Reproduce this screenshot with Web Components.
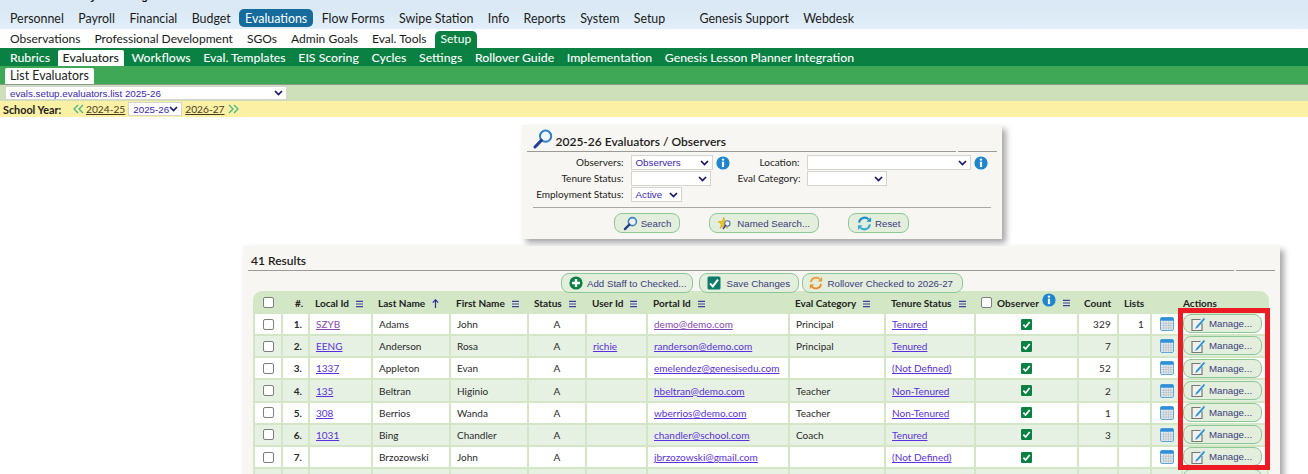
<!DOCTYPE html>
<html>
<head>
<meta charset="utf-8">
<title>Evaluators</title>
<style>
  html, body { margin: 0; padding: 0; height: 474px; overflow: hidden; background: #fff; }
  body { font-family: Lato, "Liberation Sans", sans-serif; }
</style>
</head>
<body>
<gn-header></gn-header>
<gn-page></gn-page>

<script>
const ICONS = {
  search: `<svg viewBox="0 0 16 16" width="15" height="15"><circle cx="10" cy="6" r="4.3" fill="#eaf3fb" stroke="#3f7fc4" stroke-width="1.7"/><path d="M6.8 9.2 2 14" stroke="#27408b" stroke-width="2.4" stroke-linecap="round"/></svg>`,
  bigsearch: `<svg viewBox="0 0 20 20" width="20" height="20"><circle cx="12.6" cy="7.2" r="5.6" fill="#f2f7fc" stroke="#2f7fd0" stroke-width="2"/><path d="M8.4 11.4 2 18" stroke="#1f3f96" stroke-width="3" stroke-linecap="round"/></svg>`,
  star: `<svg viewBox="0 0 18 16" width="16" height="15"><path d="M6.5 1 8.2 5.6 13 5.8 9.3 8.8 10.6 13.6 6.5 10.9 2.4 13.6 3.7 8.8 0 5.8 4.8 5.6Z" fill="#f2c21b" stroke="#c99a10" stroke-width=".5"/><circle cx="10.5" cy="8" r="3" fill="#eef4fa" stroke="#4a6fb5" stroke-width="1.2"/><path d="M8.4 10.2 6 13.6" stroke="#2b4590" stroke-width="1.6" stroke-linecap="round"/></svg>`,
  refresh: `<svg viewBox="0 0 16 16" width="15" height="15" fill="none"><path d="M2.2 7A6 6 0 0 1 12.4 3.6" stroke="#1d8fd0" stroke-width="2.2"/><path d="M10 6.2h5V1.2Z" fill="#1d8fd0"/><path d="M13.8 9A6 6 0 0 1 3.6 12.4" stroke="#35a9d8" stroke-width="2.2"/><path d="M6 9.8H1v5Z" fill="#35a9d8"/></svg>`,
  plus: `<svg viewBox="0 0 14 14" width="14" height="14"><circle cx="7" cy="7" r="6.6" fill="#0a8043"/><path d="M7 3v8M3 7h8" stroke="#fff" stroke-width="2.4"/></svg>`,
  save: `<svg viewBox="0 0 14 14" width="14" height="14"><rect x=".5" y=".5" width="13" height="13" rx="1.5" fill="#0d7a6a"/><path d="M3 7.4 5.8 10.4 11 3.6" fill="none" stroke="#fff" stroke-width="2"/></svg>`,
  rollover: `<svg viewBox="0 0 16 16" width="14" height="14" fill="none"><path d="M2.2 7A6 6 0 0 1 12.4 3.6" stroke="#ef9a32" stroke-width="2"/><path d="M10 6.2h5V1.2Z" fill="#ef9a32"/><path d="M13.8 9A6 6 0 0 1 3.6 12.4" stroke="#ea8a22" stroke-width="2"/><path d="M6 9.8H1v5Z" fill="#ea8a22"/></svg>`,
  manage: `<svg viewBox="0 0 14 14" width="14" height="14" fill="none"><path d="M9.5 2.5H1v11h10V6" fill="#f1f1ee" stroke="#777" stroke-width="1.2"/><path d="M13 .8 5.2 9.4 4 12l2.6-1.2L14 2.2Z" fill="#2a94d8"/></svg>`,
  info: `<svg viewBox="0 0 14 14" width="14" height="14"><circle cx="7" cy="7" r="6.6" fill="#1e86cf"/><circle cx="7" cy="3.6" r="1.2" fill="#fff"/><rect x="5.9" y="5.7" width="2.2" height="5.4" fill="#fff"/></svg>`,
  calendar: `<svg viewBox="0 0 14 14" width="14" height="14"><rect x=".5" y=".5" width="13" height="13" rx="1.5" fill="#e9eef2" stroke="#5fa8dc"/><rect x=".5" y=".5" width="13" height="3.2" rx="1" fill="#2f8fd8"/><path d="M1 6.3h12M1 8.6h12M1 11h12M3.6 4v9M6 4v9M8.4 4v9M10.8 4v9" stroke="#b5bcc2" stroke-width=".7"/></svg>`,
  menu: `<svg viewBox="0 0 8 8" width="7" height="8"><path d="M0 1h8M0 4h8M0 7h8" stroke="#3f3f9e" stroke-width="1.3"/></svg>`,
  sortUp: `<svg viewBox="0 0 7 9" width="7" height="9" fill="none"><path d="M3.5 9V1M.8 3.6 3.5 .8l2.7 2.8" stroke="#2d2d9e" stroke-width="1.2"/></svg>`,
  chevron: `<svg viewBox="0 0 9 6" width="9" height="6" fill="none"><path d="M1 1 4.5 4.5 8 1" stroke="#14147a" stroke-width="1.7"/></svg>`,
  check: `<svg viewBox="0 0 11 11" width="11" height="11"><rect width="11" height="11" rx="1.3" fill="#0a8043"/><path d="M2.4 5.7 4.6 8 8.7 3" fill="none" stroke="#fff" stroke-width="1.8"/></svg>`,
  prev: `<svg viewBox="0 0 11 10" width="11" height="10" fill="none"><path d="M5 1 1 5l4 4M10 1 6 5l4 4" stroke="#43b98a" stroke-width="1.3"/></svg>`,
  next: `<svg viewBox="0 0 11 10" width="11" height="10" fill="none"><path d="M1 1l4 4-4 4M6 1l4 4-4 4" stroke="#43b98a" stroke-width="1.3"/></svg>`
};

class GnTab extends HTMLElement {
  connectedCallback() {
    this.attachShadow({ mode: "open" });
    this.shadowRoot.innerHTML = `
      <style>
        :host { display: block; padding: var(--tab-pt, 0) var(--tab-pad, 6px) var(--tab-pb, 0); color: var(--tab-color, #1a1a1a); white-space: nowrap; }
        :host([active]) { background: var(--tab-active-bg); color: var(--tab-active-color); border-radius: var(--tab-radius, 4px); }
      </style>
      <slot></slot>`;
  }
}
customElements.define("gn-tab", GnTab);

class GnBar extends HTMLElement {
  connectedCallback() {
    this.attachShadow({ mode: "open" });
    this.shadowRoot.innerHTML = `
      <style>
        :host { display: flex; align-items: flex-end; box-sizing: border-box; font: 12.4px/17px Lato, "Liberation Sans", sans-serif; }
        :host([kind="main"]) { height: 24px; padding: 4px 0 2px 4px; gap: 2.4px; background: linear-gradient(#d9e8f4, #e2effa); line-height: 17px; --tab-pt: 1px;
          --tab-active-bg: #156b9c; --tab-active-color: #fff; --tab-radius: 5px; }
        :host([kind="sub"]) { height: 19px; padding-left: 4px; gap: 2px; background: #fff; font-size: 12.05px; line-height: 16px; --tab-pb: 1px;
          --tab-active-bg: #0a8043; --tab-active-color: #fff; --tab-radius: 5px 5px 0 0; }
        :host([kind="third"]) { height: 18px; padding-left: 5px; gap: 2.6px; background: #0a8043; --tab-color: #fff; --tab-pad: 5px; font-size: 12.3px; font-weight: 500; line-height: 16px;
          --tab-active-bg: #fff; --tab-active-color: #222; --tab-radius: 2px 2px 0 0; }
        :host([kind="fourth"]) { height: 19px; padding-left: 5px; background: #3fa856; border-bottom: 1px solid #8c9a8c;
          --tab-active-bg: #fff; --tab-active-color: #222; --tab-radius: 2px 2px 0 0; --tab-pad: 5px; line-height: 16px; }
      </style>
      <slot></slot>`;
  }
}
customElements.define("gn-bar", GnBar);

class GnSelect extends HTMLElement {
  connectedCallback() {
    this.attachShadow({ mode: "open" });
    const w = this.getAttribute("width") || 80;
    this.shadowRoot.innerHTML = `
      <style>
        :host { display: inline-flex; align-items: center; box-sizing: border-box; width: ${w}px; height: 15px;
          padding: 0 3px 0 4px; background: #fff; border: 1px solid #d4d4d0; color: #3a1fb4;
          font: 9.8px "Liberation Sans", Arial, sans-serif; white-space: nowrap; }
        svg { flex: none; margin-left: auto; }
      </style>
      <slot></slot>${ICONS.chevron}`;
  }
}
customElements.define("gn-select", GnSelect);

class GnBtn extends HTMLElement {
  connectedCallback() {
    this.attachShadow({ mode: "open" });
    const icon = ICONS[this.getAttribute("icon")] || "";
    this.shadowRoot.innerHTML = `
      <style>
        :host { display: inline-flex; align-items: center; box-sizing: border-box; height: 20px; padding: 0 9px; gap: 3px;
          background: #e3eedd; border: 1.5px solid #8cc896; border-radius: 8px; color: #3c3c7c;
          font: 9.7px "Liberation Sans", Arial, sans-serif; white-space: nowrap; }
        svg { display: block; flex: none; }
      </style>
      ${icon}<slot></slot>`;
  }
}
customElements.define("gn-btn", GnBtn);

class GnPanel extends HTMLElement {
  connectedCallback() {
    this.attachShadow({ mode: "open" });
    this.shadowRoot.innerHTML = `
      <style>
        :host { display: block; position: relative; box-sizing: border-box; background: #f8f6f2; box-shadow: 4px 4px 6px rgba(0,0,0,.35); padding: 0 5px; }
        .head { display: flex; align-items: flex-end; gap: 3px; font: 600 12px/15px Lato, "Liberation Sans", sans-serif; color: #1c1c1c; height: var(--head-h, 24px); padding: 0 var(--head-pad, 6px) 2px; box-sizing: border-box; }
        .rule { display: flex; gap: 2px; height: 1px; }
        .rule i { background: #9a9a96; flex: 1; }
        .rule i + i { flex: none; width: 39px; }
      </style>
      <div class="head"><slot name="icon"></slot><slot name="title"></slot></div>
      <div class="rule"><i></i><i></i></div>
      <slot></slot>`;
  }
}
customElements.define("gn-panel", GnPanel);

class GnInfo extends HTMLElement {
  connectedCallback() {
    this.attachShadow({ mode: "open" });
    this.shadowRoot.innerHTML = `<style>:host { display: inline-block; width: 14px; height: 14px; } svg { display: block; }</style>${ICONS.info}`;
  }
}
customElements.define("gn-info", GnInfo);

class GnHeader extends HTMLElement {
  connectedCallback() {
    this.attachShadow({ mode: "open" });
    this.shadowRoot.innerHTML = `
      <style>
        :host { display: block; }
        .title { height: 5px; overflow: hidden; background: #d9e8f4; }
        .title b { display: block; margin: -12px 0 0 5px; font: 700 11px/16px "Liberation Sans", sans-serif; letter-spacing: .1px; color: #111; }
        .list { display: flex; align-items: center; height: 16px; background: #cde0ba; padding-left: 5px; }
        .year { display: flex; align-items: center; height: 16px; background: #fbf0a4; }
        .year b { font: 700 10.8px Lato, sans-serif; color: #222; margin-left: 3px; width: 70px; }
        .year a { color: #4a3a20; text-decoration: underline; font: 10.2px Lato, sans-serif; margin: 0 3px 0 2px; }
        .year svg { display: block; flex: none; }
        gn-select { height: 14px; }
      </style>
      <div class="title"><b>2025-26 Chimney Rock High School District</b></div>
      <gn-bar kind="main">
        <gn-tab>Personnel</gn-tab><gn-tab>Payroll</gn-tab><gn-tab>Financial</gn-tab><gn-tab>Budget</gn-tab>
        <gn-tab active>Evaluations</gn-tab><gn-tab>Flow Forms</gn-tab><gn-tab>Swipe Station</gn-tab><gn-tab>Info</gn-tab>
        <gn-tab>Reports</gn-tab><gn-tab>System</gn-tab><gn-tab>Setup</gn-tab>
        <gn-tab style="margin-left:20px">Genesis Support</gn-tab><gn-tab>Webdesk</gn-tab>
      </gn-bar>
      <gn-bar kind="sub">
        <gn-tab>Observations</gn-tab><gn-tab>Professional Development</gn-tab><gn-tab>SGOs</gn-tab><gn-tab>Admin Goals</gn-tab>
        <gn-tab>Eval. Tools</gn-tab><gn-tab active>Setup</gn-tab>
      </gn-bar>
      <gn-bar kind="third">
        <gn-tab>Rubrics</gn-tab><gn-tab active>Evaluators</gn-tab><gn-tab>Workflows</gn-tab><gn-tab>Eval. Templates</gn-tab>
        <gn-tab>EIS Scoring</gn-tab><gn-tab>Cycles</gn-tab><gn-tab>Settings</gn-tab><gn-tab>Rollover Guide</gn-tab>
        <gn-tab>Implementation</gn-tab><gn-tab>Genesis Lesson Planner Integration</gn-tab>
      </gn-bar>
      <gn-bar kind="fourth"><gn-tab active>List Evaluators</gn-tab></gn-bar>
      <div class="list"><gn-select width="282">evals.setup.evaluators.list 2025-26</gn-select></div>
      <div class="year">
        <b>School Year:</b>${ICONS.prev}<a>2024-25</a>
        <gn-select width="54">2025-26</gn-select>
        <a style="margin-left:3px">2026-27</a>${ICONS.next}
      </div>`;
  }
}
customElements.define("gn-header", GnHeader);

class GnSearch extends HTMLElement {
  connectedCallback() {
    this.attachShadow({ mode: "open" });
    this.shadowRoot.innerHTML = `
      <style>
        :host { display: block; width: 480px; margin: 0 auto; }
        gn-panel { height: 114px; --head-h: 26px; }
        .form { display: grid; grid-template-columns: 91px 100px 62px auto; column-gap: 7px; row-gap: 1px; align-items: center; padding: 3px 0 0 6px; font: 10px/15px Lato, sans-serif; color: #222; }
        .form label { text-align: right; white-space: nowrap; }
        .cell { display: flex; align-items: center; gap: 3px; }
        hr { border: 0; height: 1px; background: #a8a8a4; margin: 5px 6px; }
        .btns { display: flex; justify-content: center; gap: 29px; }
        .btns gn-btn { padding: 0 8px; }
        svg { display: block; }
      </style>
      <gn-panel>
        <span slot="icon">${ICONS.bigsearch}</span>
        <span slot="title">2025-26 Evaluators / Observers</span>
        <div class="form">
          <label>Observers:</label><div class="cell"><gn-select width="82">Observers</gn-select><gn-info></gn-info></div>
          <label>Location:</label><div class="cell"><gn-select width="164"></gn-select><gn-info></gn-info></div>
          <label>Tenure Status:</label><div class="cell"><gn-select width="80"></gn-select></div>
          <label>Eval Category:</label><div class="cell"><gn-select width="80"></gn-select></div>
          <label>Employment Status:</label><div class="cell"><gn-select width="51">Active</gn-select></div>
        </div>
        <hr>
        <div class="btns">
          <gn-btn icon="search">Search</gn-btn>
          <gn-btn icon="star">Named Search...</gn-btn>
          <gn-btn icon="refresh">Reset</gn-btn>
        </div>
      </gn-panel>`;
  }
}
customElements.define("gn-search", GnSearch);

const ROWS = [
  { id: "SZYB", last: "Adams", first: "John", user: "", portal: "demo@demo.com", cat: "Principal", tenure: "Tenured", count: "329", lists: "1", seen: true },
  { id: "EENG", last: "Anderson", first: "Rosa", user: "richie", portal: "randerson@demo.com", cat: "Principal", tenure: "Tenured", count: "7", lists: "" },
  { id: "1337", last: "Appleton", first: "Evan", user: "", portal: "emelendez@genesisedu.com", cat: "", tenure: "(Not Defined)", count: "52", lists: "" },
  { id: "135", last: "Beltran", first: "Higinio", user: "", portal: "hbeltran@demo.com", cat: "Teacher", tenure: "Non-Tenured", count: "2", lists: "" },
  { id: "308", last: "Berrios", first: "Wanda", user: "", portal: "wberrios@demo.com", cat: "Teacher", tenure: "Non-Tenured", count: "1", lists: "" },
  { id: "1031", last: "Bing", first: "Chandler", user: "", portal: "chandler@school.com", cat: "Coach", tenure: "Tenured", count: "3", lists: "" },
  { id: "", last: "Brzozowski", first: "John", user: "", portal: "jbrzozowski@gmail.com", cat: "", tenure: "(Not Defined)", count: "", lists: "" }
];

class GnResults extends HTMLElement {
  connectedCallback() {
    this.attachShadow({ mode: "open" });
    const widths = [26, 25, 61, 76, 76, 56, 59, 140, 94, 88, 101, 38, 31, 29, 84];
    const rows = ROWS.map((r, i) => `
      <tr class="${i % 2 ? "alt" : ""}">
        <td class="c"><span class="box"></span></td>
        <td class="num">${i + 1}.</td>
        <td><a class="${r.seen ? "seen" : ""}">${r.id}</a></td>
        <td>${r.last}</td>
        <td>${r.first}</td>
        <td class="c">A</td>
        <td><a>${r.user}</a></td>
        <td><a class="${r.seen ? "seen" : ""}">${r.portal}</a></td>
        <td>${r.cat}</td>
        <td><a>${r.tenure}</a></td>
        <td class="c">${ICONS.check}</td>
        <td class="r">${r.count}</td>
        <td class="r">${r.lists}</td>
        <td class="c">${ICONS.calendar}</td>
        <td class="act"><gn-btn icon="manage" class="m">Manage...</gn-btn></td>
      </tr>`).join("");
    this.shadowRoot.innerHTML = `
      <style>
        :host { display: block; margin-top: 7px; }
        gn-panel { height: 240px; }
        .tools { display: flex; height: 22px; padding: 2px 0 0 313px; box-sizing: border-box; position: relative; z-index: 1; }
        .tools gn-btn { padding: 0 6px 0 7px; gap: 4px; }
        .tools .save { margin-left: 6px; padding: 0 7.5px 0 7px; gap: 5px; }
        .tools .roll { margin-left: 3px; padding: 0 9px 0 6px; gap: 5px; }
        table { border-collapse: separate; border-spacing: 2px; table-layout: fixed; width: 1016px; margin: -2px 0 0 5px; background: #d3e7c6; border-radius: 9px 9px 0 0; font: 10px/14px Lato, sans-serif; color: #2a2a2a; }
        th { height: 19px; padding: 0 0 0 5px; text-align: left; font-weight: 700; color: #222; white-space: nowrap; }
        th svg { margin-left: 7px; vertical-align: -1px; }
        td { height: 20.17px; padding: 0 0 0 6px; background: #fff; white-space: nowrap; overflow: hidden; }
        tr.alt td { background: #e6f1e3; }
        td.c, th.c { text-align: center; padding: 0; }
        td.r { text-align: right; padding: 0 6px 0 0; letter-spacing: .2px; }
        td.num { font-weight: 700; text-align: right; padding: 0 6px 0 0; }
        td.act { padding: 0; }
        td svg { display: block; margin: 0 auto; }
        a { color: #5a30e0; text-decoration: underline; }
        a.seen { color: #8748b4; }
        .box { display: inline-block; box-sizing: border-box; width: 11px; height: 11px; background: #fff; border: 1px solid #7f7f7f; border-radius: 2px; vertical-align: middle; }
        td .box, th.c .box { display: block; margin: 0 auto; }
        .m { width: 79px; height: 19px; padding: 0 0 0 7px; gap: 4px; }
        .obs .wrap { display: flex; align-items: center; height: 18px; letter-spacing: .08px; }
        .obs .box { margin-right: 5px; flex: none; }
        .obs gn-info { margin: -6px 0 0 3px; flex: none; }
        .mark { position: absolute; left: 935px; top: 62px; width: 92px; height: 162px; box-sizing: border-box; border: 5px solid #ed1c24; pointer-events: none; }
      </style>
      <gn-panel style="--head-h:24px; --head-pad:3px">
        <span slot="title">41 Results</span>
        <div class="tools">
          <gn-btn icon="plus">Add Staff to Checked...</gn-btn>
          <gn-btn icon="save" class="save">Save Changes</gn-btn>
          <gn-btn icon="rollover" class="roll">Rollover Checked to 2026-27</gn-btn>
        </div>
        <table>
          <colgroup>${widths.map(w => `<col style="width:${w}px">`).join("")}</colgroup>
          <tr>
            <th class="c"><span class="box"></span></th>
            <th style="padding-left:12px">#.</th>
            <th>Local Id${ICONS.menu}</th>
            <th>Last Name${ICONS.sortUp}</th>
            <th>First Name${ICONS.menu}</th>
            <th>Status${ICONS.menu}</th>
            <th>User Id${ICONS.menu}</th>
            <th>Portal Id${ICONS.menu}</th>
            <th>Eval Category${ICONS.menu}</th>
            <th>Tenure Status${ICONS.menu}</th>
            <th class="obs"><div class="wrap"><span class="box"></span>Observer<gn-info></gn-info>${ICONS.menu}</div></th>
            <th>Count</th>
            <th>Lists</th>
            <th></th>
            <th style="padding-left:0">Actions</th>
          </tr>
          ${rows}
          <tr class="alt">
            <td class="c"></td><td></td><td></td><td></td><td></td><td></td><td></td><td></td><td></td><td></td><td></td><td></td><td></td><td></td>
            <td class="act"><gn-btn class="m"></gn-btn></td>
          </tr>
        </table>
        <div class="mark"></div>
      </gn-panel>`;
  }
}
customElements.define("gn-results", GnResults);

class GnPage extends HTMLElement {
  connectedCallback() {
    this.attachShadow({ mode: "open" });
    this.shadowRoot.innerHTML = `
      <style>
        :host { display: block; width: 1037px; margin-left: 243px; padding-top: 8px; }
      </style>
      <gn-search></gn-search>
      <gn-results></gn-results>`;
  }
}
customElements.define("gn-page", GnPage);
</script>
</body>
</html>
